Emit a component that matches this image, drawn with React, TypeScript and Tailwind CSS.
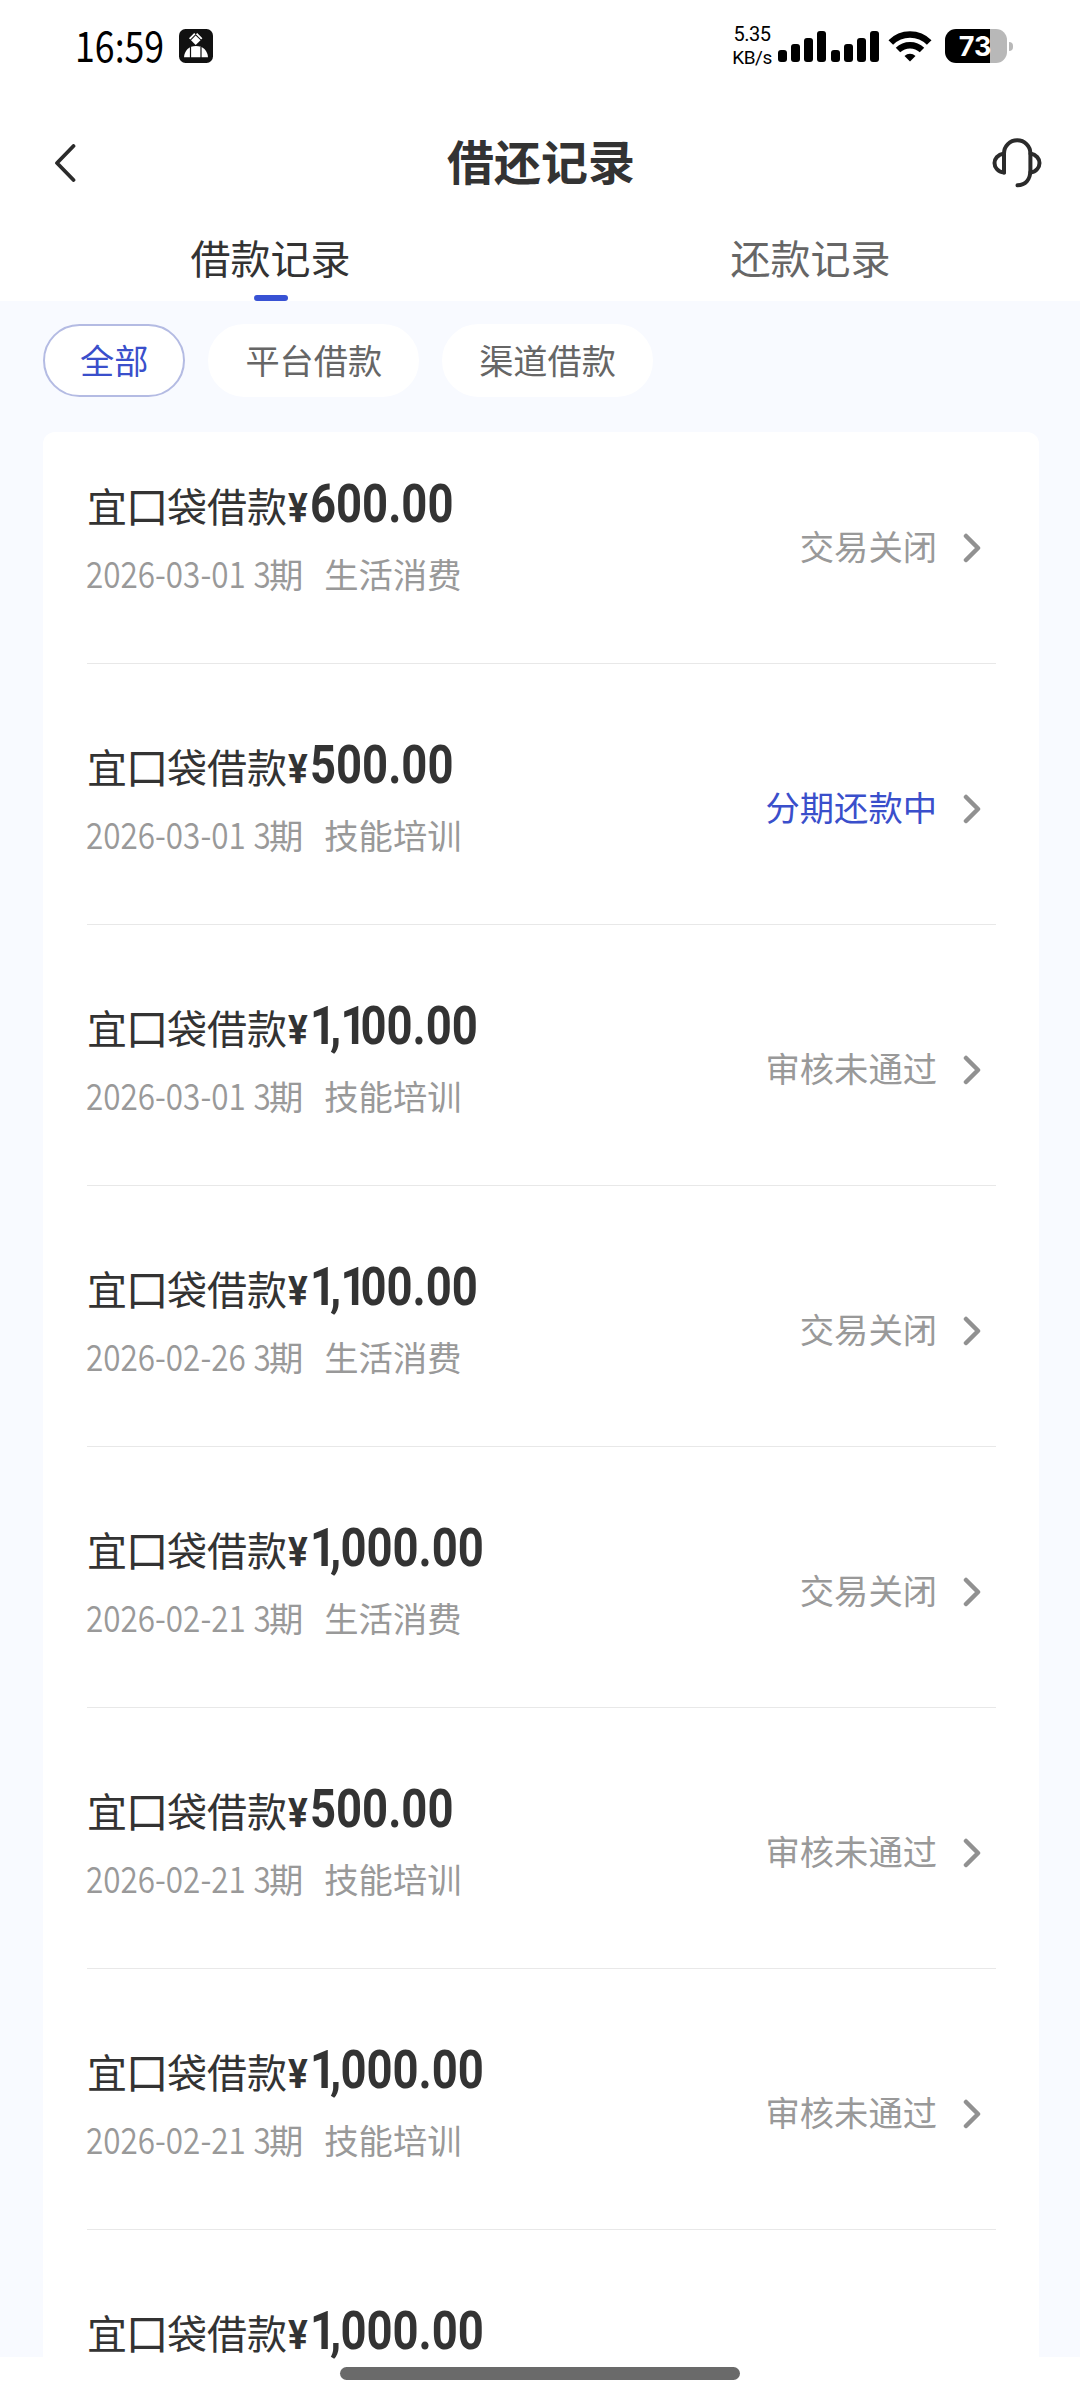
const cjk = "font-['Noto_Sans_CJK_SC',sans-serif]";

interface LoanRecord {
  amount: string;
  date: string;
  purpose: string;
  status: string;
  active?: boolean;
}

const records: LoanRecord[] = [
  { amount: '600.00', date: '2026-03-01', purpose: '生活消费', status: '交易关闭' },
  { amount: '500.00', date: '2026-03-01', purpose: '技能培训', status: '分期还款中', active: true },
  { amount: '1,100.00', date: '2026-03-01', purpose: '技能培训', status: '审核未通过' },
  { amount: '1,100.00', date: '2026-02-26', purpose: '生活消费', status: '交易关闭' },
  { amount: '1,000.00', date: '2026-02-21', purpose: '生活消费', status: '交易关闭' },
  { amount: '500.00', date: '2026-02-21', purpose: '技能培训', status: '审核未通过' },
  { amount: '1,000.00', date: '2026-02-21', purpose: '技能培训', status: '审核未通过' },
  { amount: '1,000.00', date: '', purpose: '', status: '' },
];

const filters = ['全部', '平台借款', '渠道借款'];

function SignalBars() {
  return (
    <div className="flex items-end gap-[4px]">
      <div className="w-[9px] h-[12px] rounded-[3px] bg-black" />
      <div className="w-[9px] h-[18px] rounded-[3px] bg-black" />
      <div className="w-[9px] h-[24px] rounded-[3px] bg-black" />
      <div className="w-[9px] h-[31px] rounded-[3px] bg-black" />
    </div>
  );
}

function StatusBar() {
  return (
    <div className="flex justify-between h-[92px] pl-[75px] pr-[67px] text-black">
      <div className="flex items-center">
        <div className="w-[104px] pb-[5px]">
          <span className="inline-block origin-left scale-x-[0.85] text-[42px] leading-[60px]">
            16:59
          </span>
        </div>
        <svg width="34" height="34" viewBox="0 0 34 34">
          <rect width="34" height="34" rx="6.5" fill="#111" />
          <path d="M10 9.2 15.2 4 16.5 5.3 11.3 10.5ZM23.4 9.2 18.2 4 16.900 5.300 22.100 10.500Z" fill="#fff" />
          <path d="M16.7 6.5 21.5 11.3 16.7 16 12 11.3Z" fill="#fff" />
          <path d="M5 28.3C5.5 21.5 10 17 17 17S28.5 21.5 29 28.3Z" fill="#fff" />
          <path d="M11.5 18V29M22 18V29" stroke="#111" strokeWidth="1.2" />
        </svg>
      </div>
      <div className="flex items-center">
        <div className="flex flex-col items-center w-[38px] mr-[7px] font-['Roboto',sans-serif] text-[20px] leading-[23px] tracking-[-0.5px]">
          <span>5.35</span>
          <span className="text-[19px]">KB/s</span>
        </div>
        <div className="flex gap-[5px]">
          <SignalBars />
          <SignalBars />
        </div>
        <svg className="ml-[9px]" width="44" height="32" viewBox="0 0 44 32">
          <g fill="none" stroke="#000" strokeWidth="6.5">
            <path d="M2.8 12.5A27 27 0 0 1 41.2 12.5" />
            <path d="M10 20A17.5 17.5 0 0 1 34 20" />
          </g>
          <path d="M22 31.5 16.5 26A8 8 0 0 1 27.5 26Z" />
        </svg>
        <div className="ml-[13px] flex items-center">
          <div className="w-[62px] h-[34px] pr-[2px] rounded-[11px] bg-linear-to-r from-black from-[73%] to-[#b8b8b8] to-[73%] flex items-center justify-center font-['Inter',sans-serif] font-bold text-[27px] leading-none text-white">
            73
          </div>
          <div className="ml-[2px] w-[4px] h-[9px] rounded-r-full bg-[#b8b8b8]" />
        </div>
      </div>
    </div>
  );
}

function Header() {
  return (
    <div className="flex items-center justify-between h-[142px] pl-[54px] pr-[38px]">
      <svg className="w-[50px]" height="38" viewBox="0 0 50 38" fill="none">
        <path
          d="M19.5 2 3 19 19.5 36"
          stroke="#2b2b2b"
          strokeWidth="3.8"
          strokeLinecap="round"
          strokeLinejoin="round"
        />
      </svg>
      <h1 className="text-[47px] leading-[64px] font-bold pr-[14px] pb-[7px]">借还记录</h1>
      <svg
        width="50"
        height="50"
        viewBox="0 0 50 50"
        fill="none"
        stroke="#2b2b2b"
        strokeWidth="4"
        strokeLinecap="round"
        strokeLinejoin="round"
      >
        <path d="M12 34.5V15.5a13.2 13.2 0 0 1 26.4 0V32C38.4 42 33 47 25.5 47.3" />
        <path d="M12 15.5C5.5 16.5 2.5 21 2.5 25S5.5 34 12 34.5" />
        <path d="M38.4 15.5C44.5 16.5 47.5 21 47.5 25S44.5 34 38.4 34.5" />
      </svg>
    </div>
  );
}

function Tabs() {
  return (
    <div className="flex h-[67px] text-[40px] leading-[46px]">
      <div className="flex-1 flex flex-col items-center justify-between pl-[1px]">
        <span>借款记录</span>
        <div className="w-[34px] h-[6px] rounded-[3px] bg-[#3852d4]" />
      </div>
      <div className="flex-1 text-center text-[#666] pl-[1px]">还款记录</div>
    </div>
  );
}

function Filters() {
  return (
    <div className="flex gap-[23px] text-[34.2px] leading-none">
      {filters.map((name, i) => (
        <div
          key={name}
          className={`h-[73px] rounded-full border-2 bg-white flex items-center px-[35px] pb-[3px] ${
            i === 0 ? 'border-[#b4bbe3] text-[#3a4fcb]' : 'border-white text-[#666]'
          }`}
        >
          {name}
        </div>
      ))}
    </div>
  );
}

// "1" is narrower than the other digits, so it gets its own tracking
function Amount({ value }: { value: string }) {
  return (
    <span className="ml-[1px] font-['Roboto',sans-serif] font-bold">
      <span className="inline-block w-[22px] text-[41px]">
        <span className="inline-block origin-left scale-x-[0.9]">¥</span>
      </span>
      <span className="inline-block text-[53px] origin-left scale-x-[0.857]">
        {value.split(/(1|,)/).map((part, i) => (
          <span
            key={i}
            className={part === '1' ? 'tracking-[-7px]' : part === ',' ? 'tracking-[-1px]' : ''}
          >
            {part}
          </span>
        ))}
      </span>
    </span>
  );
}

function RecordRow({ record }: { record: LoanRecord }) {
  return (
    <div
      className={`flex justify-between shrink-0 ${
        record.date ? 'h-[261px] border-b border-[#e8e8e8]' : 'h-[150px]'
      }`}
    >
      <div className="pt-[78px]">
        <div className="flex items-baseline h-[46px] leading-[46px] text-[40px] whitespace-nowrap">
          <span>宜</span>
          <span className="inline-block scale-[1.08]">口</span>
          <span>袋借款</span>
          <Amount value={record.amount} />
        </div>
        {record.date ? (
          <div className="flex items-baseline h-[50px] mt-[20px] leading-[50px] text-[34.3px] text-[#999] whitespace-nowrap">
            <div className="w-[183px] -ml-[1px]">
              <span className="inline-block origin-left scale-x-[0.85] text-[37px] font-[350] [word-spacing:1px]">
                {record.date} 3
              </span>
            </div>
            <span>期</span>
            <span className="ml-[21px]">{record.purpose}</span>
          </div>
        ) : null}
      </div>
      {record.status ? (
        <div className="flex items-center h-[50px] mt-[119px] pr-[13px]">
          <span
            className={`text-[34.3px] pb-[2px] ${record.active ? 'text-[#3a4fcb]' : 'text-[#999]'}`}
          >
            {record.status}
          </span>
          <svg className="ml-[26px] mt-[2px]" width="20" height="30" viewBox="0 0 20 30" fill="none">
            <path
              d="M3 3 15 15 3 27"
              stroke="#919191"
              strokeWidth="4.5"
              strokeLinecap="round"
              strokeLinejoin="round"
            />
          </svg>
        </div>
      ) : null}
    </div>
  );
}

function App() {
  return (
    <div className={`${cjk} flex flex-col w-[1080px] h-[2400px] overflow-hidden bg-white text-[#333]`}>
      <StatusBar />
      <Header />
      <Tabs />
      <div className="flex flex-col h-[2056px] shrink-0 bg-[#f8faff] pl-[43px] pr-[41px] pt-[23px]">
        <Filters />
        <div className="flex flex-col flex-1 min-h-0 mt-[35px] pl-[44px] pr-[43px] rounded-t-[12px] bg-white">
          <div className="flex flex-col -mt-[29px]">
            {records.map((record, i) => (
              <RecordRow key={i} record={record} />
            ))}
          </div>
        </div>
      </div>
      <div className="flex justify-center pt-[10px]">
        <div className="w-[400px] h-[13px] rounded-full bg-[#6a6a6a]" />
      </div>
    </div>
  );
}
export default App;
